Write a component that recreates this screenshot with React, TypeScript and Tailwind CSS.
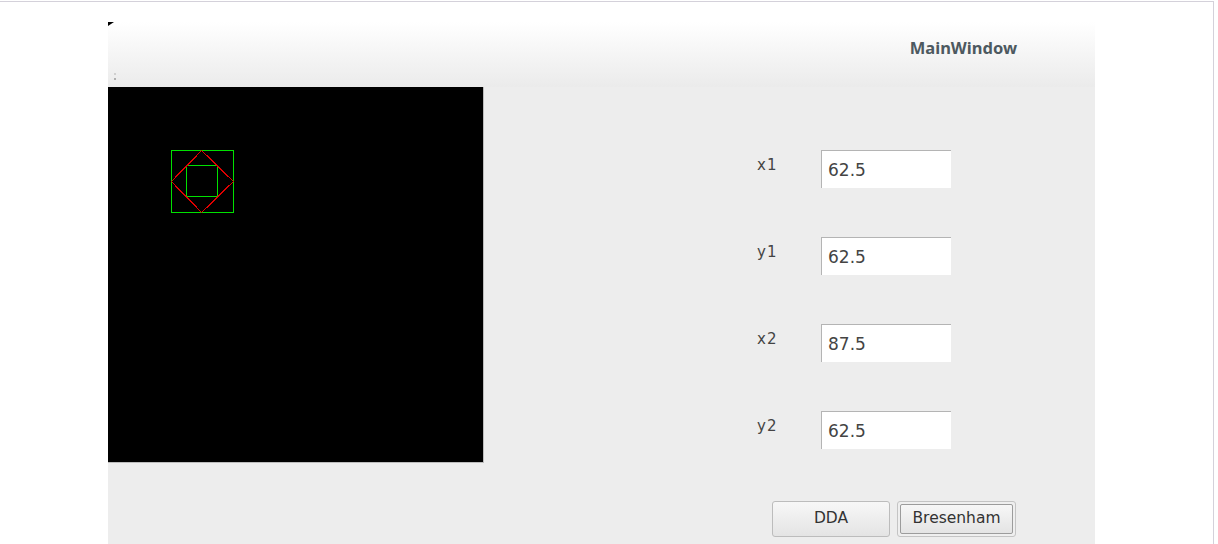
import React from "react";

function Field({ label, value }: { label: string; value: string }) {
  return (
    <div className="flex h-[38px] items-start">
      <div className="w-[64px] leading-[30px] text-[15px] text-[#444] tracking-[1px]" style={{ fontFamily: '"DejaVu Sans", sans-serif' }}>
        {label}
      </div>
      <div className="w-[130px] h-[38px] bg-white border-t border-l border-[#b4b4b4] pl-[6px] pt-[2px] flex items-center text-[17px] text-[#444]" style={{ fontFamily: '"DejaVu Sans", sans-serif' }}>
        {value}
      </div>
    </div>
  );
}

export default function App() {
  return (
    <div className="w-[1218px] h-[544px] bg-white overflow-hidden">
      <div className="mt-px w-[1214px] h-[543px] border-t border-r border-[#d4d1da] pt-[20px] pl-[108px]">
        <div className="w-[987px] h-[522px] flex flex-col bg-[#ededed] relative">
          <svg width="6" height="4" className="absolute left-0 top-0 z-10">
            <polygon points="0,0 6,0 0,4" fill="#000" />
          </svg>
          <div className="h-[65px] bg-gradient-to-b from-white to-[#ebebeb] flex justify-end items-start pt-[14px] pr-[78px] relative">
            <span className="text-[16.5px] font-bold text-[#4d5960]" style={{ fontFamily: '"Noto Sans", sans-serif' }}>
              MainWindow
            </span>
            <div className="absolute left-[6px] top-[51px] w-[2px] h-[2px] bg-[#d0d0d0]" />
            <div className="absolute left-[6px] top-[56px] w-[2px] h-[2px] bg-[#b0b0b0]" />
          </div>
          <div className="flex flex-1">
            <div className="w-[376px] h-[376px] border-r border-b border-[#bcbcbc]">
              <svg width="375" height="375" className="block bg-black">
                <rect x="63.5" y="63.5" width="62" height="62" fill="none" stroke="#00e000" strokeWidth="1" shapeRendering="crispEdges" />
                <rect x="78.5" y="78.5" width="31" height="31" fill="none" stroke="#00e000" strokeWidth="1" shapeRendering="crispEdges" />
                <polygon points="93.5,63.5 125.5,94.5 93.5,125.5 63.5,94.5" fill="none" stroke="#e00000" strokeWidth="1.2" shapeRendering="crispEdges" />
              </svg>
            </div>
            <div className="flex flex-col pl-[273px] pt-[63px]">
              <div className="flex flex-col gap-[49px]">
                <Field label="x1" value="62.5" />
                <Field label="y1" value="62.5" />
                <Field label="x2" value="87.5" />
                <Field label="y2" value="62.5" />
              </div>
              <div className="flex gap-[7px] mt-[52px] ml-[15px]" style={{ fontFamily: '"DejaVu Sans", sans-serif' }}>
                <div className="w-[118px] h-[36px] rounded-[3px] border border-[#bcbcbc] bg-gradient-to-b from-[#f7f7f7] to-[#e4e4e4] flex items-center justify-center text-[15.5px] text-[#333]">
                  DDA
                </div>
                <div className="w-[119px] h-[36px] rounded-[3px] border border-[#c4c4c4] bg-[#efefef] p-[2px]">
                  <div className="w-full h-full rounded-[2px] border border-[#9c9c9c] bg-gradient-to-b from-[#f7f7f7] to-[#e4e4e4] flex items-center justify-center text-[15.5px] text-[#333]">
                    Bresenham
                  </div>
                </div>
              </div>
            </div>
          </div>
        </div>
      </div>
    </div>
  );
}
